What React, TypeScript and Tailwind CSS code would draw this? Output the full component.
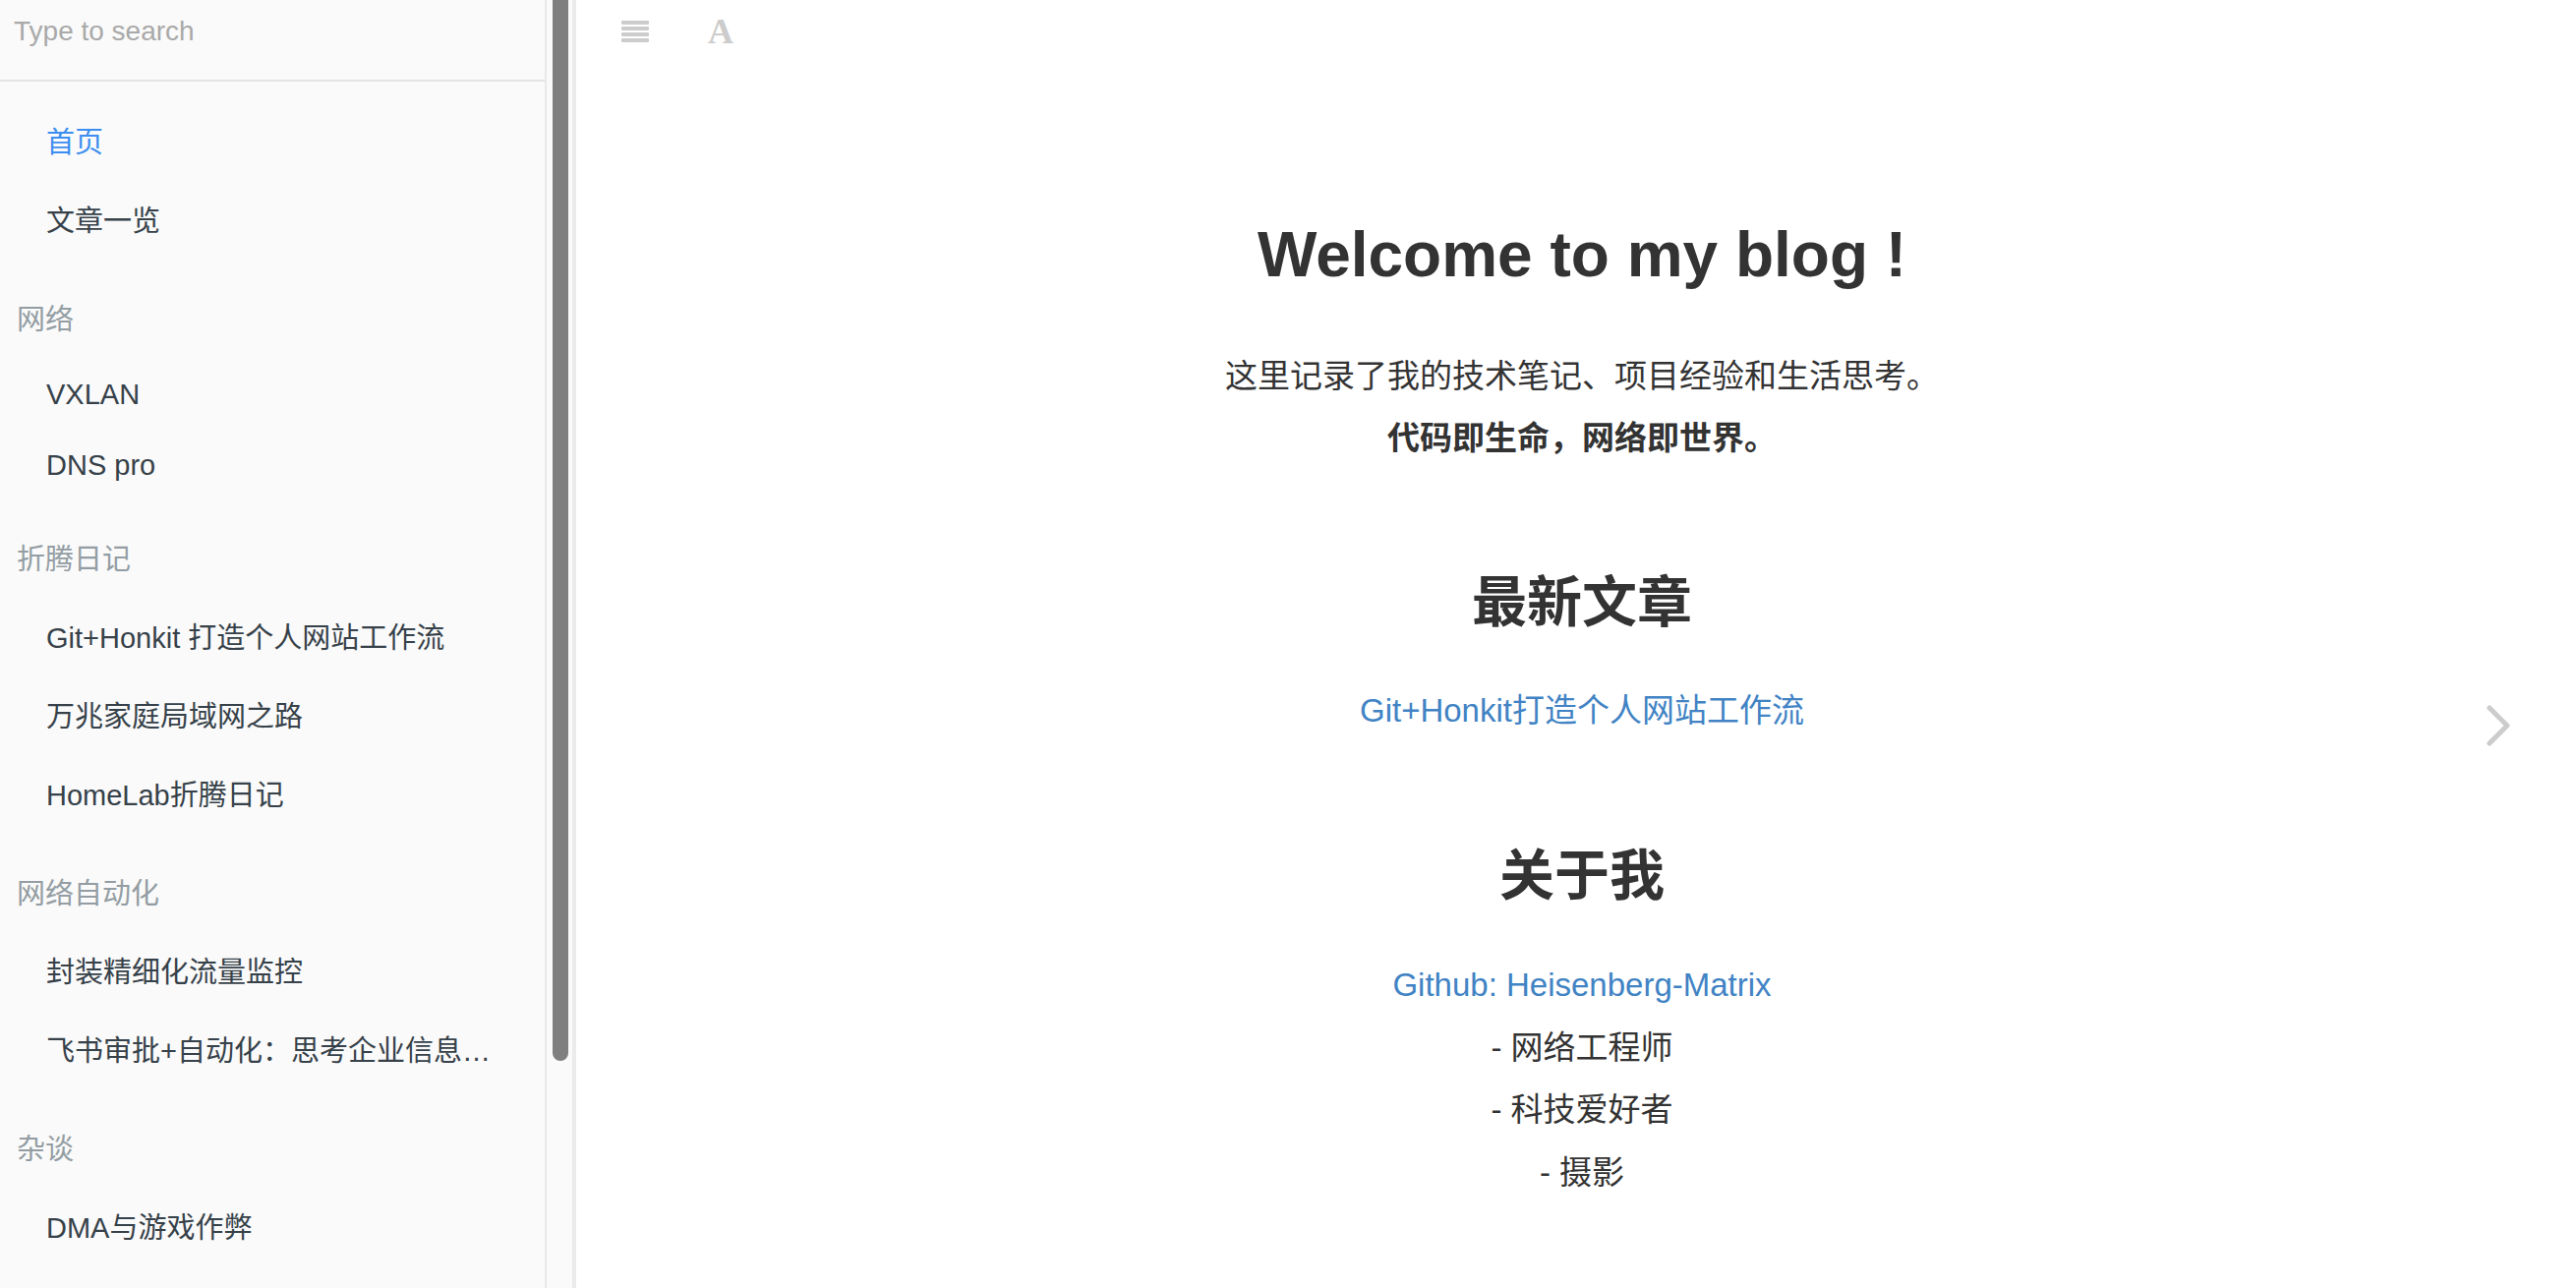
import React from "react";

type NavEntry =
  | { kind: "item"; text: string; active?: boolean; latin?: boolean }
  | { kind: "header"; text: string }
  | { kind: "divider" };

const nav: NavEntry[] = [
  { kind: "item", text: "首页", active: true },
  { kind: "item", text: "文章一览" },
  { kind: "divider" },
  { kind: "header", text: "网络" },
  { kind: "item", text: "VXLAN", latin: true },
  { kind: "item", text: "DNS pro", latin: true },
  { kind: "divider" },
  { kind: "header", text: "折腾日记" },
  { kind: "item", text: "Git+Honkit 打造个人网站工作流" },
  { kind: "item", text: "万兆家庭局域网之路" },
  { kind: "item", text: "HomeLab折腾日记" },
  { kind: "divider" },
  { kind: "header", text: "网络自动化" },
  { kind: "item", text: "封装精细化流量监控" },
  { kind: "item", text: "飞书审批+自动化：思考企业信息化建设与自动化运维" },
  { kind: "divider" },
  { kind: "header", text: "杂谈" },
  { kind: "item", text: "DMA与游戏作弊" },
];

function Sidebar() {
  return (
    <div className="flex h-full w-[586px] shrink-0 bg-[#fafafa]">
      <div className="flex h-full w-[556px] flex-col border-r-2 border-[#e8e8e8]">
        <div className="h-[83px] shrink-0 border-b-2 border-[#e5e5e5]">
          <input
            type="text"
            placeholder="Type to search"
            className="h-[64px] w-full bg-transparent pl-[14px] text-[28px] text-[#364149] outline-none placeholder:text-[#a9a9a9]"
          />
        </div>
        <ul className="flex flex-col pt-[23px]">
          {nav.map((e, i) => {
            if (e.kind === "divider") return <li key={i} className="h-[20px]" />;
            if (e.kind === "header")
              return (
                <li key={i} className="flex h-[80px] items-center pl-[17px] text-[29px] text-[#939da3]">
                  {e.text}
                </li>
              );
            return (
              <li
                key={i}
                className={
                  "flex items-center pl-[47px] pr-[40px] text-[29px] " +
                  (e.latin ? "h-[72px] " : "h-[80px] ") +
                  (e.active ? "text-[#3d8ef0]" : "text-[#364149]")
                }
              >
                <span className="block min-w-0 truncate whitespace-nowrap">{e.text}</span>
              </li>
            );
          })}
        </ul>
      </div>
      <div className="h-full w-[26px] shrink-0">
        <div className="ml-[6px] h-[1079px] w-[16px] rounded-b-[8px] bg-[#7f7f7f]" />
      </div>
      <div className="h-full w-[4px] shrink-0 bg-[#ebebeb]" />
    </div>
  );
}

function Main() {
  return (
    <div className="relative h-full flex-1 bg-white text-[#333]">
      <div className="flex h-[64px] items-center pl-[46px]">
        <svg width="28" height="22" viewBox="0 0 28 22" className="block">
          <rect x="0" y="0" width="28" height="4" rx="1" fill="#cccccc" />
          <rect x="0" y="6" width="28" height="4" rx="1" fill="#cccccc" />
          <rect x="0" y="12" width="28" height="4" rx="1" fill="#cccccc" />
          <rect x="0" y="18" width="28" height="4" rx="1" fill="#cccccc" />
        </svg>
        <span className="ml-[60px] font-['Liberation_Serif',serif] text-[36px] font-bold leading-none text-[#cccccc]">
          A
        </span>
      </div>

      <div className="flex flex-col items-center pl-[12px] text-center">
        <h1 className="mt-[155px] text-[64px] font-bold leading-[80px]">Welcome to my blog !</h1>
        <p className="mt-[52px] text-[33px] leading-[63px]">这里记录了我的技术笔记、项目经验和生活思考。</p>
        <p className="text-[33px] font-bold leading-[63px]">代码即生命，网络即世界。</p>

        <h2 className="mt-[101px] text-[56px] font-bold leading-[70px]">最新文章</h2>
        <a className="mt-[43px] text-[33px] leading-[63px] text-[#4183c4]">Git+Honkit打造个人网站工作流</a>

        <h2 className="mt-[102px] text-[56px] font-bold leading-[70px]">关于我</h2>
        <div className="mt-[44px] flex flex-col items-center text-[33px] leading-[63.5px]">
          <a className="text-[#4183c4]">Github: Heisenberg-Matrix</a>
          <span>- 网络工程师</span>
          <span>- 科技爱好者</span>
          <span>- 摄影</span>
        </div>
      </div>

      <svg
        width="32"
        height="48"
        viewBox="0 0 32 48"
        className="absolute right-[62px] top-[714px]"
      >
        <polyline
          points="6,6 24,24 6,42"
          fill="none"
          stroke="#cccccc"
          strokeWidth="5"
          strokeLinecap="round"
          strokeLinejoin="round"
        />
      </svg>
    </div>
  );
}

export default function App() {
  return (
    <div className="flex h-[1310px] w-[2620px] overflow-hidden font-['Liberation_Sans','Noto_Sans_CJK_SC',sans-serif]">
      <Sidebar />
      <Main />
    </div>
  );
}
